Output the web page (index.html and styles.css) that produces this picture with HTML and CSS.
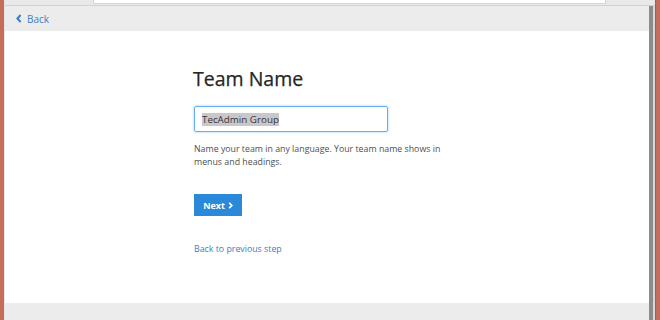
FILE: index.html
```html
<!DOCTYPE html>
<html>
  <head>
    <meta name="viewport" content="width=device-width, initial-scale=1.0" />
    <link rel="stylesheet" href="styles.css">
  </head>
  <body>
    <div class="frame">
      <div class="edge"></div>

      <div class="window">
        <div class="chrome">
          <div class="addr"></div>
        </div>

        <div class="page">
          <div class="view">
            <header class="topbar">
              <a href="#" class="back">
                <svg width="6" height="9" viewBox="0 0 6 9">
                  <path d="M4.6 1 L1.4 4.5 L4.6 8" fill="none" stroke="currentColor" stroke-width="2" />
                </svg>
                <span>Back</span>
              </a>
            </header>

            <main class="content">
              <div class="form">
                <h1 class="title">Team Name</h1>
                <div class="field">
                  <span class="selected">TecAdmin Group</span>
                </div>
                <p class="hint">
                  Name your team in any language. Your team name shows in
                  menus and headings.
                </p>
                <button class="next">
                  <span>Next</span>
                  <svg width="5" height="7" viewBox="0 0 5 7">
                    <path d="M1.2 0.8 L3.8 3.5 L1.2 6.2" fill="none" stroke="currentColor" stroke-width="1.7" />
                  </svg>
                </button>
                <a href="#" class="prev">Back to previous step</a>
              </div>
            </main>

            <footer class="bottom"></footer>
          </div>
          <div class="scrollbar"></div>
        </div>
      </div>

      <div class="edge"></div>
    </div>
  </body>
</html>
```

FILE: styles.css
```css
:root {
  --edge: #c46d5c;
  --chrome: #e9e9e9;
  --bar: #ececec;
  --text: #262626;
  --muted: #4f4f4f;
  --link: #3b80c6;
  --accent: #2a89d8;
}

* {
  box-sizing: border-box;
  margin: 0;
  padding: 0;
}

body {
  width: 660px;
  height: 320px;
  overflow: hidden;
  background: #ffffff;
  font-family: "Open Sans", "Liberation Sans", sans-serif;
  color: var(--text);
}

.frame {
  display: flex;
  height: 320px;
}

.edge {
  width: 5px;
  background: var(--edge);
  border-left: 1px solid #b05a4a;
}

.edge:first-child {
  border-left: none;
  border-right: 1px solid #e4e4e4;
}

.window {
  flex: 1;
  display: flex;
  flex-direction: column;
}

.chrome {
  height: 6px;
  background: var(--chrome);
  border-bottom: 1px solid #d2d2d2;
  padding-left: 88px;
  padding-right: 49px;
}

.addr {
  height: 4px;
  background: #ffffff;
  border: 1px solid #d6d6d6;
  border-top: none;
}

.page {
  flex: 1;
  display: flex;
}

.view {
  flex: 1;
  display: flex;
  flex-direction: column;
}

.scrollbar {
  width: 6px;
  background: #8c8c8c;
  border-right: 2px solid #d8d8d8;
}

.topbar {
  height: 25px;
  background: var(--bar);
  display: flex;
  align-items: center;
  padding-left: 11px;
}

.back {
  display: flex;
  align-items: center;
  gap: 5px;
  color: var(--link);
  text-decoration: none;
  font-size: 10px;
}

.content {
  flex: 1;
  background: #ffffff;
}

.form {
  width: 266px;
  margin: 0 auto;
  padding-top: 35px;
}

.title {
  font-size: 19.5px;
  font-weight: 400;
  line-height: 26px;
  color: var(--text);
  margin-left: -1px;
  margin-bottom: 14px;
  -webkit-text-stroke: 0.25px var(--text);
}

.field {
  width: 194px;
  height: 26px;
  border: 1px solid #66afe9;
  border-radius: 2px;
  box-shadow: 0 0 3px rgba(102, 175, 233, 0.6);
  display: flex;
  align-items: center;
  padding-left: 7px;
  font-size: 9.8px;
}

.selected {
  background: #c8c8c8;
  color: #3c3040;
  line-height: 13px;
}

.hint {
  margin-top: 11px;
  font-size: 8.8px;
  line-height: 12.5px;
  color: var(--muted);
}

.next {
  display: flex;
  align-items: center;
  justify-content: center;
  gap: 3px;
  margin-top: 26px;
  width: 48px;
  height: 22px;
  border: none;
  background: var(--accent);
  color: #ffffff;
  font-family: inherit;
  font-size: 9px;
  font-weight: 700;
}

.prev {
  display: block;
  margin-top: 27px;
  font-size: 8.8px;
  line-height: 12px;
  color: var(--link);
  text-decoration: none;
}

.bottom {
  height: 17px;
  background: var(--bar);
}
```
